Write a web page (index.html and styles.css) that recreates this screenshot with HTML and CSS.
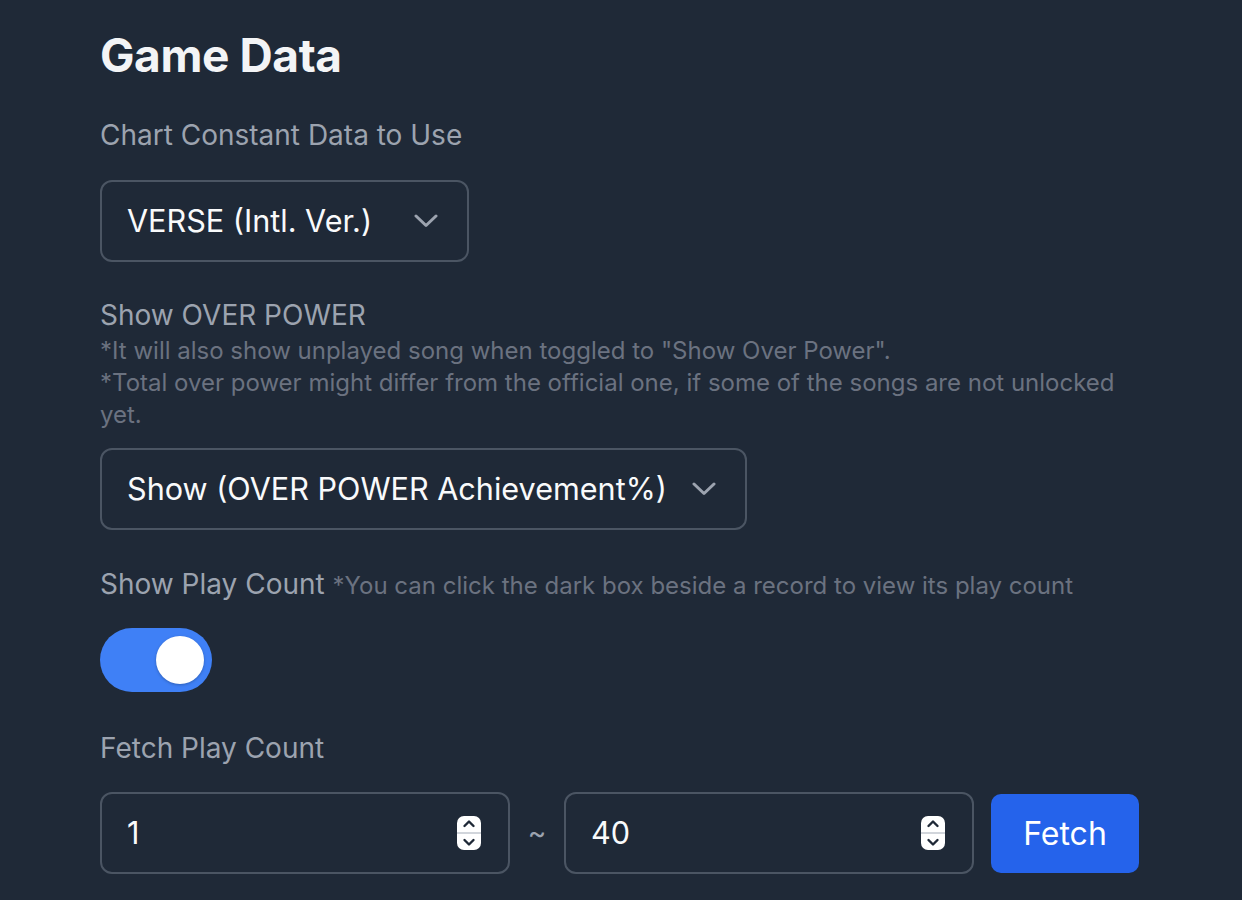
FILE: index.html
```html
<!DOCTYPE html>
<html lang="en">
<head>
<meta charset="utf-8">
<title>Game Data</title>
<link rel="stylesheet" href="styles.css">
</head>
<body>
<main class="panel">
  <h1 class="title">Game Data</h1>

  <div class="label label-first">Chart Constant Data to Use</div>
  <div class="select select-short">
    <span class="select-text">VERSE (Intl. Ver.)</span>
    <svg class="chev" width="24" height="14" viewBox="0 0 24 14"><path d="M2 2 L12 11.5 L22 2" fill="none" stroke="#9ca3af" stroke-width="3" stroke-linecap="round" stroke-linejoin="round"/></svg>
  </div>

  <div class="label label-section">Show OVER POWER</div>
  <p class="hint">*It will also show unplayed song when toggled to "Show Over Power".<br>*Total over power might differ from the official one, if some of the songs are not unlocked yet.</p>
  <div class="select select-long">
    <span class="select-text">Show (OVER POWER Achievement%)</span>
    <svg class="chev" width="24" height="14" viewBox="0 0 24 14"><path d="M2 2 L12 11.5 L22 2" fill="none" stroke="#9ca3af" stroke-width="3" stroke-linecap="round" stroke-linejoin="round"/></svg>
  </div>

  <div class="label label-play">Show Play Count <span class="hint-inline">*You can click the dark box beside a record to view its play count</span></div>
  <div class="toggle"><span class="knob"></span></div>

  <div class="label label-fetch">Fetch Play Count</div>
  <div class="fetch-row">
    <div class="num-input">
      <span class="num-value">1</span>
      <svg class="spin" width="24" height="34" viewBox="0 0 24 34"><rect x="0" y="0" width="24" height="34" rx="7" fill="#ffffff"/><rect x="0" y="16" width="24" height="2" fill="#d1d5db"/><path d="M7.5 10 L12 5.5 L16.5 10" fill="none" stroke="#1f2937" stroke-width="2.4" stroke-linecap="round" stroke-linejoin="round"/><path d="M7.5 24 L12 28.5 L16.5 24" fill="none" stroke="#1f2937" stroke-width="2.4" stroke-linecap="round" stroke-linejoin="round"/></svg>
    </div>
    <span class="tilde">~</span>
    <div class="num-input">
      <span class="num-value">40</span>
      <svg class="spin" width="24" height="34" viewBox="0 0 24 34"><rect x="0" y="0" width="24" height="34" rx="7" fill="#ffffff"/><rect x="0" y="16" width="24" height="2" fill="#d1d5db"/><path d="M7.5 10 L12 5.5 L16.5 10" fill="none" stroke="#1f2937" stroke-width="2.4" stroke-linecap="round" stroke-linejoin="round"/><path d="M7.5 24 L12 28.5 L16.5 24" fill="none" stroke="#1f2937" stroke-width="2.4" stroke-linecap="round" stroke-linejoin="round"/></svg>
    </div>
    <button class="fetch-btn" type="button">Fetch</button>
  </div>
</main>
</body>
</html>
```

FILE: styles.css
```css
html, body {
  margin: 0;
  padding: 0;
  background: #1f2937;
}
body {
  font-family: Inter, "Noto Sans", sans-serif;
  color: #f3f4f6;
  height: 900px;
  overflow: hidden;
}
.panel {
  padding: 27px 0 0 100px;
  width: 1042px;
}
.title {
  margin: 0;
  font-size: 46px;
  line-height: 56px;
  font-weight: 700;
  color: #f3f4f6;
  letter-spacing: -0.4px;
}
.label {
  font-size: 28px;
  line-height: 40px;
  height: 40px;
  color: #9ca3af;
  font-weight: 400;
}
.label-first { margin-top: 32px; }
.label-section { margin-top: 33px; }
.label-play { margin-top: 34px; }
.label-fetch { margin-top: 36px; }
.hint {
  margin: 0;
  font-size: 24px;
  line-height: 32px;
  color: #6b7280;
}
.hint-inline {
  font-size: 24px;
  line-height: 1;
  color: #6b7280;
}
.select {
  box-sizing: border-box;
  height: 82px;
  border: 2px solid #4b5563;
  border-radius: 12px;
  display: flex;
  align-items: center;
  justify-content: space-between;
  padding: 0 29px 0 25px;
  margin-top: 25px;
  background: #1f2937;
}
.select-short { width: 369px; }
.select-long { width: 647px; margin-top: 17px; }
.select-text {
  font-size: 30.6px;
  color: #f9fafb;
  line-height: 40px;
}
.chev { display: block; }
.toggle {
  margin-top: 24px;
  width: 112px;
  height: 64px;
  border-radius: 32px;
  background: #3f80f6;
  display: flex;
  align-items: center;
  justify-content: flex-end;
  padding: 0 8px;
  box-sizing: border-box;
}
.knob {
  width: 48px;
  height: 48px;
  border-radius: 50%;
  background: #ffffff;
  box-shadow: 0 1px 3px rgba(0,0,0,0.25);
}
.fetch-row {
  margin-top: 24px;
  display: flex;
  align-items: center;
}
.num-input {
  box-sizing: border-box;
  width: 410px;
  height: 82px;
  border: 2px solid #4b5563;
  border-radius: 12px;
  display: flex;
  align-items: center;
  justify-content: space-between;
  padding: 0 27px 0 25px;
}
.num-value {
  font-size: 30.6px;
  color: #f9fafb;
  line-height: 40px;
}
.spin { display: block; }
.tilde {
  width: 54px;
  text-align: center;
  font-size: 28px;
  color: #9ca3af;
  line-height: 40px;
}
.fetch-btn {
  margin-left: 17px;
  width: 148px;
  height: 79px;
  border: none;
  border-radius: 10px;
  background: #2563eb;
  color: #ffffff;
  font-family: Inter, "Noto Sans", sans-serif;
  font-size: 32px;
  font-weight: 400;
  padding: 0;
}
```
